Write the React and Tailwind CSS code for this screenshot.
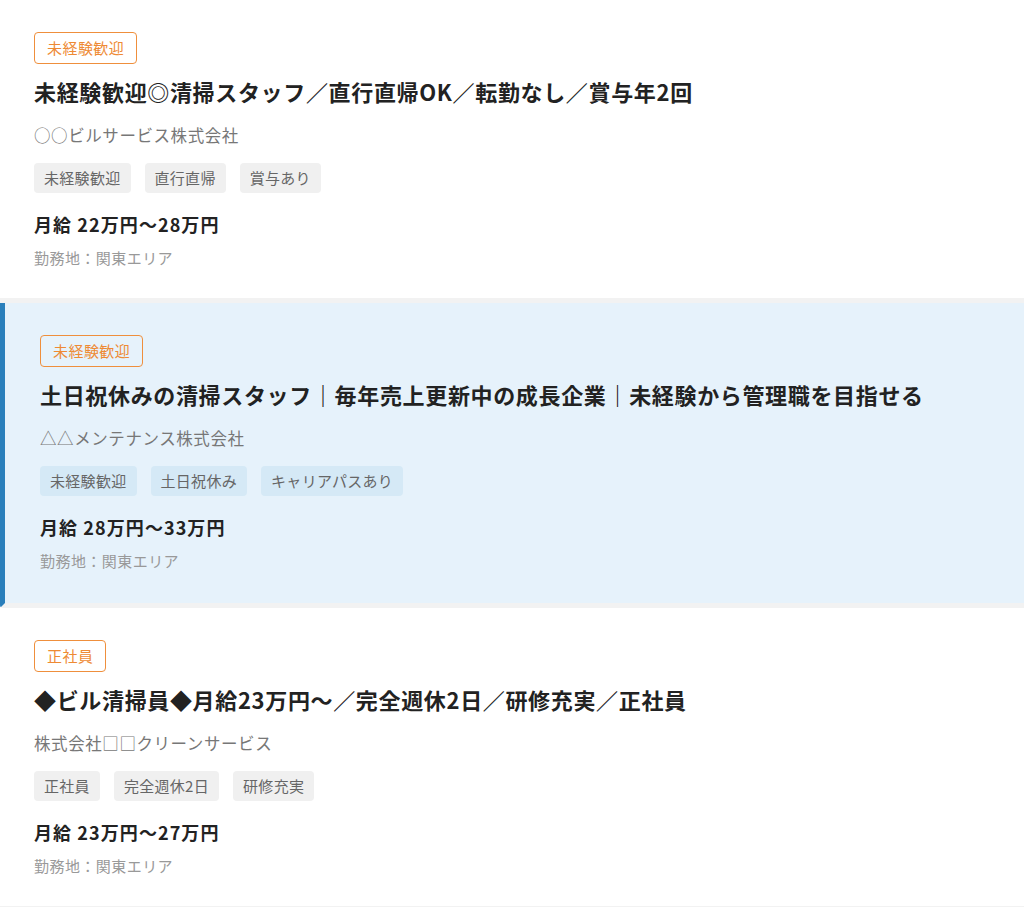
const jobs = [
  {
    badge: '未経験歓迎',
    title: '未経験歓迎◎清掃スタッフ／直行直帰OK／転勤なし／賞与年2回',
    company: '○○ビルサービス株式会社',
    tags: ['未経験歓迎', '直行直帰', '賞与あり'],
    salary: '月給 22万円〜28万円',
    area: '勤務地：関東エリア',
  },
  {
    badge: '未経験歓迎',
    title: '土日祝休みの清掃スタッフ｜毎年売上更新中の成長企業｜未経験から管理職を目指せる',
    company: '△△メンテナンス株式会社',
    tags: ['未経験歓迎', '土日祝休み', 'キャリアパスあり'],
    salary: '月給 28万円〜33万円',
    area: '勤務地：関東エリア',
    active: true,
  },
  {
    badge: '正社員',
    title: '◆ビル清掃員◆月給23万円〜／完全週休2日／研修充実／正社員',
    company: '株式会社□□クリーンサービス',
    tags: ['正社員', '完全週休2日', '研修充実'],
    salary: '月給 23万円〜27万円',
    area: '勤務地：関東エリア',
  },
];

function JobCard({ job }) {
  return (
    <div
      className={
        job.active
          ? 'border-b-[5px] border-b-[#f2f2f2] border-l-[5px] border-l-[#2a7fbb] bg-[#e6f2fb] pl-[35px] pr-8 pt-8 pb-[32px] rounded-bl-[3px]'
          : 'border-b-[5px] border-b-[#f2f2f2] bg-white px-[34px] pt-8 pb-[30px]'
      }
    >
      {/* ラベル */}
      <div className="flex">
        <span className="rounded-[4px] border border-[#ef8f3c] px-3 py-[5px] text-[15px] leading-5 tracking-[0.03em] text-[#ee8a34]">
          {job.badge}
        </span>
      </div>

      <h2 className="mt-3 text-[22px] font-bold leading-[31px] tracking-[0.03em] text-[#222]">
        {job.title}
      </h2>

      <p className="mt-[16px] text-[16.5px] leading-[25px] tracking-[0.035em] text-[#777]">
        {job.company}
      </p>

      <div className="mt-[15px] flex gap-[14px]">
        {job.tags.map((tag) => (
          <span
            key={tag}
            className={
              'rounded-[4px] px-[10px] py-[5px] text-[15px] leading-5 tracking-[0.02em] text-[#666] ' +
              (job.active ? 'bg-[#d5e9f6]' : 'bg-[#f0f0f0]')
            }
          >
            {tag}
          </span>
        ))}
      </div>

      <p className="mt-[19px] text-[18px] font-bold leading-[25px] tracking-[0.06em] text-[#222]">
        {job.salary}
      </p>

      <p className="mt-[10px] text-[15px] leading-[21px] tracking-[0.03em] text-[#999]">
        {job.area}
      </p>
    </div>
  );
}

export default function App() {
  return (
    <div
      className="min-h-screen bg-white"
      style={{ fontFamily: '"Noto Sans CJK JP", "Noto Sans", sans-serif' }}
    >
      {jobs.map((job, i) => (
        <JobCard key={i} job={job} />
      ))}
    </div>
  );
}
